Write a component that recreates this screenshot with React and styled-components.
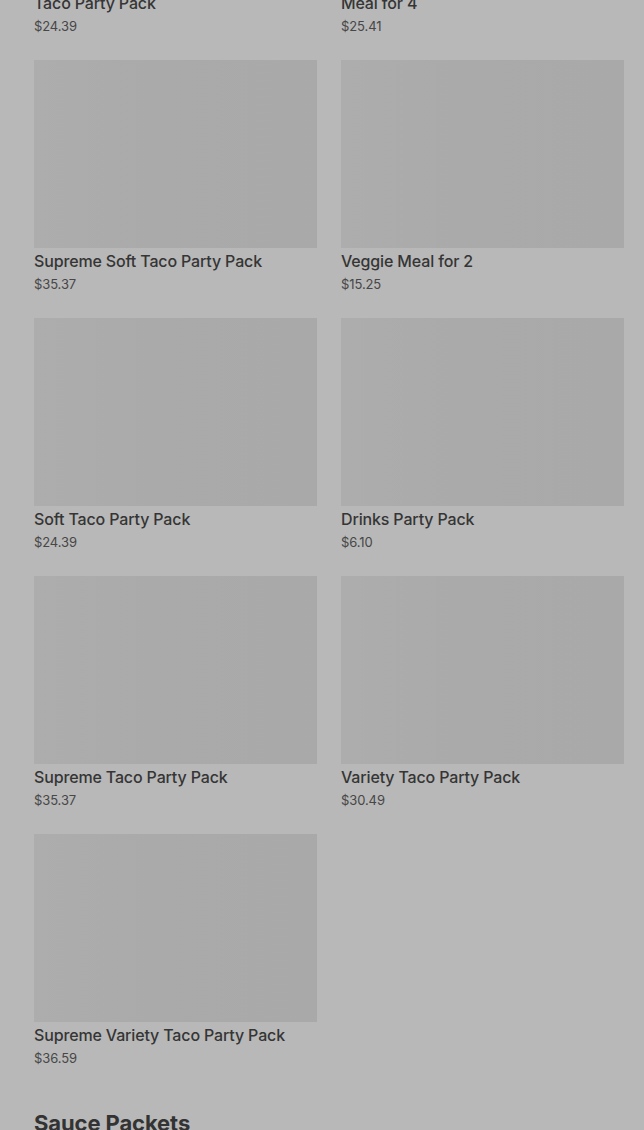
import React from "react";
import styled, { createGlobalStyle } from "styled-components";

const Global = createGlobalStyle`
  html, body { margin: 0; padding: 0; background: #b8b8b8; }
  body { font-family: Inter, "Noto Sans", sans-serif; overflow: hidden; }
`;

const Page = styled.div`
  width: 644px;
  height: 1130px;
  overflow: hidden;
  background: #b8b8b8;
`;

const Content = styled.div`
  margin-top: -198px;
  padding: 0 20px 0 34px;
`;

const Grid = styled.div`
  display: grid;
  grid-template-columns: 283px 283px;
  column-gap: 24px;
  row-gap: 24px;
`;

const Card = styled.div`
  display: flex;
  flex-direction: column;
`;

const Thumb = styled.div`
  height: 188px;
  background: linear-gradient(90deg, #adadad 0%, #aaaaaa 40%, #a9a9a9 100%);
`;

const Title = styled.div`
  margin-top: 3px;
  font-size: 16px;
  line-height: 20px;
  font-weight: 500;
  letter-spacing: -0.15px;
  color: #353535;
  white-space: nowrap;
`;

const Price = styled.div`
  margin-top: 3px;
  font-size: 13px;
  line-height: 20px;
  letter-spacing: -0.1px;
  color: #474747;
`;

const Heading = styled.h2`
  margin: 40px 0 0;
  font-size: 22px;
  line-height: 30px;
  font-weight: 700;
  letter-spacing: -0.1px;
  color: #333333;
`;

const items = [
  ["Taco Party Pack", "$24.39"],
  ["Meal for 4", "$25.41"],
  ["Supreme Soft Taco Party Pack", "$35.37"],
  ["Veggie Meal for 2", "$15.25"],
  ["Soft Taco Party Pack", "$24.39"],
  ["Drinks Party Pack", "$6.10"],
  ["Supreme Taco Party Pack", "$35.37"],
  ["Variety Taco Party Pack", "$30.49"],
  ["Supreme Variety Taco Party Pack", "$36.59"],
];

export default function App() {
  return (
    <Page>
      <Global />
      <Content>
        <Grid>
          {items.map(([t, p]) => (
            <Card key={t}>
              <Thumb />
              <Title>{t}</Title>
              <Price>{p}</Price>
            </Card>
          ))}
        </Grid>
        <Heading>Sauce Packets</Heading>
      </Content>
    </Page>
  );
}
